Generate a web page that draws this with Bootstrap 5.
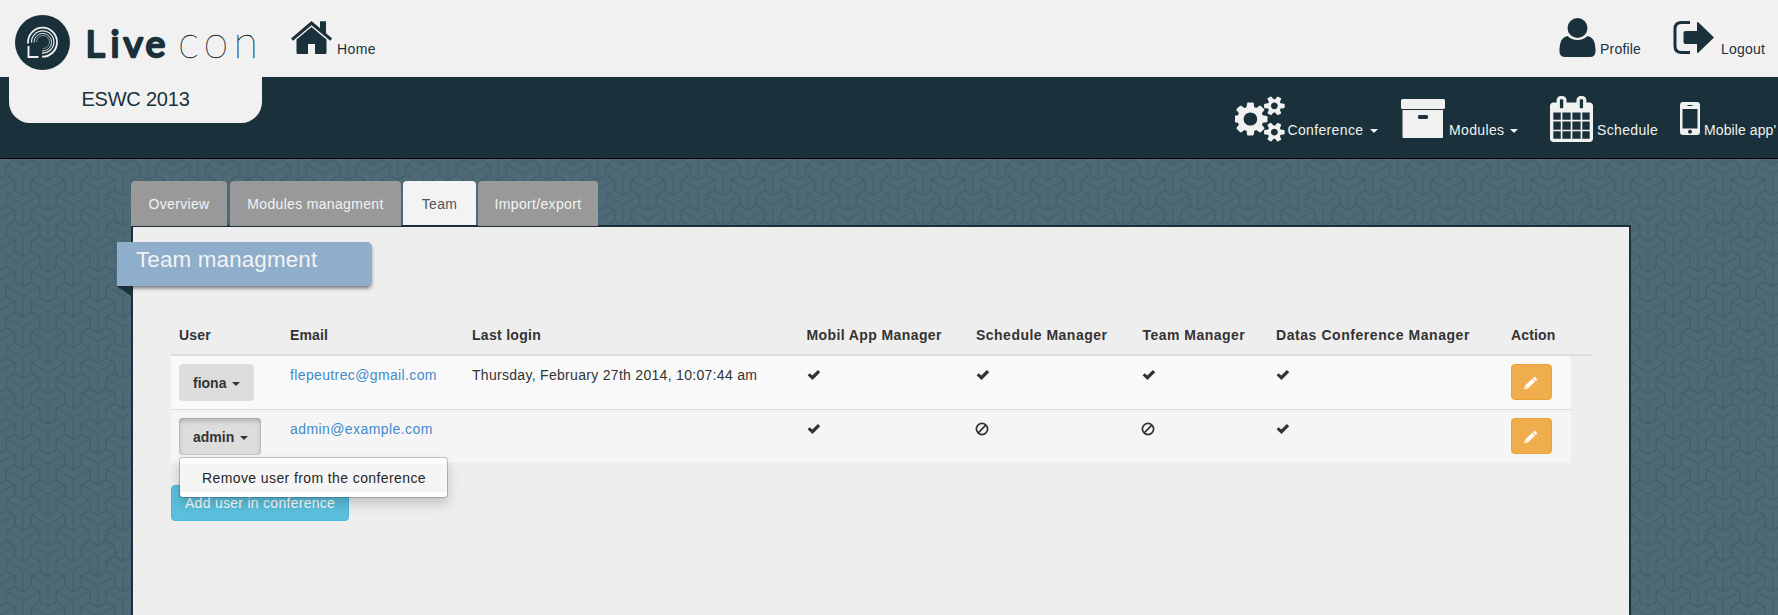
<!DOCTYPE html>
<html lang="en">
<head>
<meta charset="utf-8">
<title>Live con - Team managment</title>
<link href="https://cdn.jsdelivr.net/npm/bootstrap@5.3.0/dist/css/bootstrap.min.css" rel="stylesheet">
<style>
body{font-family:"Liberation Sans",Arial,sans-serif;font-size:14px;line-height:20px;color:#333;height:615px;overflow:hidden;
background:#4f6975 url("data:image/svg+xml,%3Csvg xmlns='http://www.w3.org/2000/svg' width='50' height='61' viewBox='0 0 50 61'%3E%3Cdefs%3E%3Cpath id='y' d='M25 24L8.500 14.500M25 24L41.500 14.500M25 24V45M8.300 14.700L16.700 10L25 15L33.300 10L41.700 14.700V25L33.300 29.700V40L25 45L16.700 40V29.700L8.300 25Z' fill='none' stroke='%23426170' stroke-width='1.300'/%3E%3C/defs%3E%3Cuse href='%23y' y='-30.500'/%3E%3Cuse href='%23y'/%3E%3Cuse href='%23y' y='30.500'/%3E%3Cuse href='%23y' x='-25' y='-15.250'/%3E%3Cuse href='%23y' x='-25' y='15.250'/%3E%3Cuse href='%23y' x='-25' y='45.750'/%3E%3Cuse href='%23y' x='25' y='-15.250'/%3E%3Cuse href='%23y' x='25' y='15.250'/%3E%3Cuse href='%23y' x='25' y='45.750'/%3E%3C/svg%3E") -1.7px 150px}
a{text-decoration:none}
.topbar{height:77px;background:#f1f1f1;color:#1a313b}
.topbar a,.subbar a{color:inherit}
.brandbox{width:291px}
.topbar .lbl{margin-top:39px;letter-spacing:.2px}
.subbar{height:82px;background:#1a313b;border-bottom:1px solid #000;color:#f1f1f1}
.subbar .lbl{margin-top:43px;letter-spacing:.35px}
.confname{width:253px;height:46px;margin-left:9px;background:#f1f1f1;color:#1a313b;border-radius:0 0 21px 21px;font-size:20px;line-height:44px;letter-spacing:-.2px}
.lbl{white-space:nowrap;flex:none}
svg{flex:none;display:block}
.caret-s{display:inline-block;border:4px solid transparent;border-top-color:currentColor;border-bottom:0;vertical-align:middle}
.wrap{width:1500px;margin-left:131px;margin-top:22px}
.tabs{gap:2px;height:44px;letter-spacing:.33px}
.tabs .nav-link{background:#999;color:#f3f3f3;border-radius:4px 4px 0 0;border:0;height:45px;padding:13px 0 0;text-align:center;z-index:1}
.tabs .nav-link.active{background:#f3f3f3;color:#555;height:44px}
.panel{background:#eee;border:2px solid #1a313b;height:420px;padding:15px 38px 0}
.ribbon{width:255px;height:44px;margin-left:-54px;background:#8eaecb;color:#f3f3f3;border-radius:0 5px 5px 0;font-size:22.4px;line-height:35px;padding-left:19px;letter-spacing:.15px;box-shadow:0 3px 4px -1px rgba(0,0,0,.55);clip-path:inset(0 -9px -9px 0)}
.fold{width:14px;height:10px;margin-left:-54px;background:#1a313b;clip-path:polygon(0 0,100% 0,100% 100%)}
.team{width:1420px;margin-top:24px}
.line{display:grid;grid-template-columns:111px 182px 334.5px 169.500px 166.5px 133.5px 235px 1fr;padding-left:8px}
.line.head{height:36px;border-bottom:2px solid #ddd;font-weight:700;padding-top:5px;letter-spacing:.48px}
.line.head .plain{letter-spacing:.15px}
.line.one,.line.two{width:1400px;padding-top:8px}
.line.one{height:53px;background:#f9f9f9}
.line.two{height:54px;background:#f5f5f5;border-top:1px solid #ddd}
.line a{color:#428bca}
.line .val{letter-spacing:.3px;padding-top:1px}
.ubtn{background:#ddd;color:#333;height:37px;border-radius:4px;font-weight:700;font-size:14px;line-height:20px;padding:0 0 0 14px;text-align:left;border:0;display:block}
.ubtn .caret-s{margin-left:1.500px}
.ubtn.pressed{box-shadow:inset 0 3px 5px rgba(0,0,0,.2),inset 0 0 0 1px #ccc}
.ebtn{background:#f0ad4e;border:1px solid #eea236;border-radius:4px;width:41px;height:36px;padding:11px 0 0 12px}
.abtn{background:#5bc0de;border:1px solid #46b8da;color:#fff;width:178px;height:36px;border-radius:4px;padding:0 0 0 13px;font-size:14px;line-height:20px;margin-top:22px;text-align:left;display:block;letter-spacing:.28px}
.umenu{left:0;top:39px;width:269px;height:41px;background:#fff;border:1px solid rgba(0,0,0,.2);background-clip:padding-box;border-radius:4px;box-shadow:0 6px 12px rgba(0,0,0,.18);padding:6px 0;z-index:5}
.umenu a{display:block;background:#f5f5f5;color:#262626;height:28px;line-height:28px;padding-left:22px;letter-spacing:.4px}
</style>
</head>
<body>
<svg width="0" height="0" class="position-absolute"><defs>
<symbol id="ok" viewBox="0 0 14 14"><path d="M.6 7.300L2.700 5.200L5.300 7.600L10.900 2.100L13.200 4.200L5.500 12Z" fill="#333"/></symbol>
<symbol id="ban" viewBox="0 0 14 14"><circle cx="7" cy="7" r="5.600" fill="none" stroke="#333" stroke-width="1.700"/><path d="M3.200 10.800L10.800 3.200" stroke="#333" stroke-width="1.700"/></symbol>
<symbol id="pen" viewBox="0 0 14 14"><path d="M.3 13.200L1.200 9.600L8.200 2.900L10.900 5.600L4 12.200ZM9 2.200L10.500.8L13.200 3.500L11.700 4.900Z" fill="#fff" stroke="#fff" stroke-width=".3"/><path d="M1.900 10.600l1.100 1.100" stroke="#f0ad4e" stroke-width="1"/></symbol>
</defs></svg>

<header class="topbar d-flex align-items-start">
  <a class="brandbox" href="#"><svg width="291" height="77" viewBox="0 0 291 77">
    <circle cx="42.500" cy="42.500" r="27.500" fill="#1a313b"/>
    <g fill="none" stroke="#f1f1f1">
      <path d="M28 43.500V42A14.500 14.500 0 1 1 42 56.700" stroke-width="1.800"/>
      <path d="M31.500 42.500A11.200 11.200 0 1 1 42 53.200" stroke-width="1.200"/>
      <path d="M34 42.500A8.800 8.800 0 1 1 42 51" stroke-width=".9"/>
      <path d="M36.500 42A6.500 6.500 0 1 1 43 48.500" stroke-width=".7" opacity=".7"/>
      <path d="M28.500 46V57H38.500" stroke-width="1.900"/>
    </g>
    <text y="56.500" font-family="Lato,sans-serif" font-weight="400" font-size="37.500" fill="#1a313b" stroke="#1a313b" stroke-width="2.400" stroke-linejoin="round" x="85.500 110.500 123.500 145.500">Live</text>
    <text y="57.500" font-family="Lato,sans-serif" font-weight="100" font-size="45" fill="#1a313b" stroke="#1a313b" stroke-width=".35" x="178 203.500 233.500">con</text>
  </svg></a>
  <a class="d-flex align-items-start" href="#"><svg width="46" height="77" viewBox="291 0 46 77" fill="#1a313b">
    <path d="M291 38.500L311.500 21L320 28.200V21.300H326V33.300L332.200 38.500L330.300 40.800L311.500 25.300L293 40.800Z"/>
    <path d="M296.500 39.500L311.500 27L326.500 39.500V52.500Q326.500 54 325 54H315V44H308V54H298Q296.500 54 296.500 52.500Z"/></svg>
    <span class="lbl" style="letter-spacing:.4px">Home</span></a>
  <a class="d-flex align-items-start ms-auto" href="#"><svg width="41" height="77" viewBox="1559.500 0 41 77" fill="#1a313b">
    <circle cx="1578" cy="28" r="10"/>
    <path d="M1568 36Q1572 40 1578 40T1588 36Q1595.500 37 1596 49V52Q1595.500 57 1590.500 57H1565.500Q1560.500 57 1560 52V49Q1560.500 37 1568 36Z"/></svg>
    <span class="lbl" style="width:73px">Profile</span></a>
  <a class="d-flex align-items-start" href="#"><svg width="48" height="77" viewBox="1673.500 0 48 77">
    <path d="M1690.500 22.500H1682Q1675.500 22.500 1675.500 29V46Q1675.500 52.500 1682 52.500H1690.500" fill="none" stroke="#1a313b" stroke-width="3"/>
    <path d="M1686 31H1697.500V23Q1697.500 21.500 1699 22.500L1714.500 37.500L1699 52.500Q1697.500 53.500 1697.500 52V44H1686Q1684 44 1684 42V33Q1684 31 1686 31Z" fill="#1a313b"/></svg>
    <span class="lbl" style="width:57px">Logout</span></a>
</header>

<nav class="subbar d-flex align-items-start">
  <div class="confname text-center">ESWC 2013</div>
  <a class="d-flex ms-auto" href="#">
    <svg width="50" height="46" viewBox="0 0 1870 1792" preserveAspectRatio="none" style="margin-top:19px" fill="#f1f1f1"><path d="M832 896q0-106-75-181t-181-75-181 75-75 181 75 181 181 75 181-75 75-181zm768 512q0-52-38-90t-90-38-90 38-38 90q0 53 37.500 90.500t90.500 37.500 90.500-37.500 37.500-90.500zm0-1024q0-52-38-90t-90-38-90 38-38 90q0 53 37.500 90.500t90.500 37.500 90.500-37.500 37.500-90.500zm-384 421v185q0 10-7 19.500t-16 10.500l-155 24q-11 35-32 76 34 48 90 115 7 11 7 20 0 12-7 19-23 30-82.500 89.500t-78.500 59.500q-11 0-21-7l-115-90q-37 19-77 31-11 108-23 155-7 24-30 24h-186q-11 0-20-7.500t-10-17.500l-23-153q-34-10-75-31l-118 89q-7 7-20 7-11 0-21-8-144-133-144-160 0-9 7-19 10-14 41-53t47-61q-23-44-35-82l-152-24q-10-1-17-9.500t-7-19.500v-185q0-10 7-19.500t16-10.500l155-24q11-35 32-76-34-48-90-115-7-11-7-20 0-12 7-20 22-30 82-89t79-59q11 0 21 7l115 90q34-18 77-32 11-108 23-154 7-24 30-24h186q11 0 20 7.500t10 17.500l23 153q34 10 75 31l118-89q8-7 20-7 11 0 21 8 144 133 144 160 0 8-7 19-12 16-42 54t-45 60q23 48 34 82l152 23q10 2 17 10.500t7 19.500zm640 533v140q0 16-149 31-12 27-30 52 51 113 51 138 0 4-4 7-122 71-124 71-8 0-46-47t-52-68q-20 2-30 2t-30-2q-14 21-52 68t-46 47q-2 0-124-71-4-3-4-7 0-25 51-138-18-25-30-52-149-15-149-31v-140q0-16 149-31 13-29 30-52-51-113-51-138 0-4 4-7 4-2 35-20t59-34 30-16q8 0 46 46.500t52 67.500q20-2 30-2t30 2q51-71 92-112l6-2q4 0 124 70 4 3 4 7 0 25-51 138 17 23 30 52 149 15 149 31zm0-1024v140q0 16-149 31-12 27-30 52 51 113 51 138 0 4-4 7-122 71-124 71-8 0-46-47t-52-68q-20 2-30 2t-30-2q-14 21-52 68t-46 47q-2 0-124-71-4-3-4-7 0-25 51-138-18-25-30-52-149-15-149-31v-140q0-16 149-31 13-29 30-52-51-113-51-138 0-4 4-7 4-2 35-20t59-34 30-16q8 0 46 46.500t52 67.500q20-2 30-2t30 2q51-71 92-112l6-2q4 0 124 70 4 3 4 7 0 25-51 138 17 23 30 52 149 15 149 31z"/></svg>
    <span class="lbl" style="width:113.500px;margin-left:3px">Conference <i class="caret-s" style="margin-left:2px"></i></span></a>
  <a class="d-flex" href="#">
    <svg width="44" height="82" viewBox="0 0 44 82" fill="#f1f1f1"><rect y="22" width="44" height="10" rx="1.500"/><path fill-rule="evenodd" d="M1.500 33H42V60Q42 61 41 61H2.500Q1.500 61 1.500 60ZM18.500 38A1.700 2 0 0 0 18.500 42H25.500A1.700 2 0 0 0 25.500 38Z"/></svg>
    <span class="lbl" style="width:101px;margin-left:4px">Modules <i class="caret-s" style="margin-left:1.500px"></i></span></a>
  <a class="d-flex" href="#">
    <svg width="43" height="46" viewBox="64 0 1664 1792" preserveAspectRatio="none" style="margin-top:19px" fill="#f1f1f1"><path d="M192 1664h288v-288h-288v288zm352 0h320v-288h-320v288zm-352-352h288v-320h-288v320zm352 0h320v-320h-320v320zm-352-384h288v-288h-288v288zm736 736h320v-288h-320v288zm-384-736h320v-288h-320v288zm768 736h288v-288h-288v288zm-384-352h320v-320h-320v320zm-352-864v-288q0-13-9.500-22.500t-22.500-9.500h-64q-13 0-22.500 9.500t-9.500 22.500v288q0 13 9.500 22.500t22.500 9.500h64q13 0 22.500-9.500t9.500-22.500zm736 864h288v-320h-288v320zm-384-384h320v-288h-320v288zm384 0h288v-288h-288v288zm32-480v-288q0-13-9.500-22.500t-22.500-9.500h-64q-13 0-22.500 9.500t-9.500 22.500v288q0 13 9.500 22.500t22.500 9.500h64q13 0 22.500-9.500t9.500-22.500zm384-64v1280q0 52-38 90t-90 38h-1408q-52 0-90-38t-38-90v-1280q0-52 38-90t90-38h128v-96q0-66 47-113t113-47h64q66 0 113 47t47 113v96h384v-96q0-66 47-113t113-47h64q66 0 113 47t47 113v96h128q52 0 90 38t38 90z"/></svg>
    <span class="lbl" style="width:83px;margin-left:4px">Schedule</span></a>
  <a class="d-flex" href="#">
    <svg width="20" height="82" viewBox="0 0 20 82" fill="#f1f1f1"><path fill-rule="evenodd" d="M3 25H17Q20 25 20 28V55Q20 58 17 58H3Q0 58 0 55V28Q0 25 3 25ZM2.500 32V51.500H17.500V32ZM7.500 28V29H12.500V28ZM10 52.800A2 2 0 1 0 10.010 52.800Z"/></svg>
    <span class="lbl" style="width:74px;margin-left:4px;letter-spacing:.1px">Mobile app'</span></a>
</nav>

<main class="wrap">
  <div class="nav tabs flex-nowrap align-items-start">
    <a class="nav-link" style="width:96px;margin-right:1px" href="#">Overview</a>
    <a class="nav-link" style="width:171px" href="#">Modules managment</a>
    <a class="nav-link active" style="width:73px" href="#">Team</a>
    <a class="nav-link" style="width:120px" href="#">Import/export</a>
  </div>
  <section class="panel">
    <div class="ribbon">Team managment</div>
    <div class="fold"></div>
    <div class="team">
      <div class="line head"><span class="plain">User</span><span class="plain">Email</span><span style="letter-spacing:.3px">Last login</span><span style="letter-spacing:.4px">Mobil App Manager</span><span>Schedule Manager</span><span>Team Manager</span><span style="letter-spacing:.56px">Datas Conference Manager</span><span class="plain">Action</span></div>
      <div class="line one">
        <div><button class="ubtn" style="width:75px">fiona <i class="caret-s"></i></button></div>
        <a class="val" href="#" style="letter-spacing:.37px">flepeutrec@gmail.com</a><span class="val">Thursday, February 27th 2014, 10:07:44 am</span>
        <svg width="14" height="14" class="mt-1"><use href="#ok"/></svg><svg width="14" height="14" class="mt-1"><use href="#ok"/></svg><svg width="14" height="14" class="mt-1" style="margin-left:-1px"><use href="#ok"/></svg><svg width="14" height="14" class="mt-1"><use href="#ok"/></svg>
        <div class="ebtn"><svg width="14" height="14"><use href="#pen"/></svg></div>
      </div>
      <div class="line two">
        <div class="position-relative"><button class="ubtn pressed" style="width:82px">admin <i class="caret-s"></i></button>
          <div class="umenu position-absolute"><a href="#" style="color:#262626">Remove user from the conference</a></div></div>
        <a class="val" href="#" style="letter-spacing:.42px">admin@example.com</a><span></span>
        <svg width="14" height="14" class="mt-1"><use href="#ok"/></svg><svg width="14" height="14" class="mt-1" style="margin-left:-1px"><use href="#ban"/></svg><svg width="14" height="14" class="mt-1" style="margin-left:-2px"><use href="#ban"/></svg><svg width="14" height="14" class="mt-1"><use href="#ok"/></svg>
        <div class="ebtn"><svg width="14" height="14"><use href="#pen"/></svg></div>
      </div>
    </div>
    <button class="abtn">Add user in conference</button>
  </section>
</main>
<script src="https://cdn.jsdelivr.net/npm/bootstrap@5.3.0/dist/js/bootstrap.bundle.min.js"></script>
</body>
</html>
